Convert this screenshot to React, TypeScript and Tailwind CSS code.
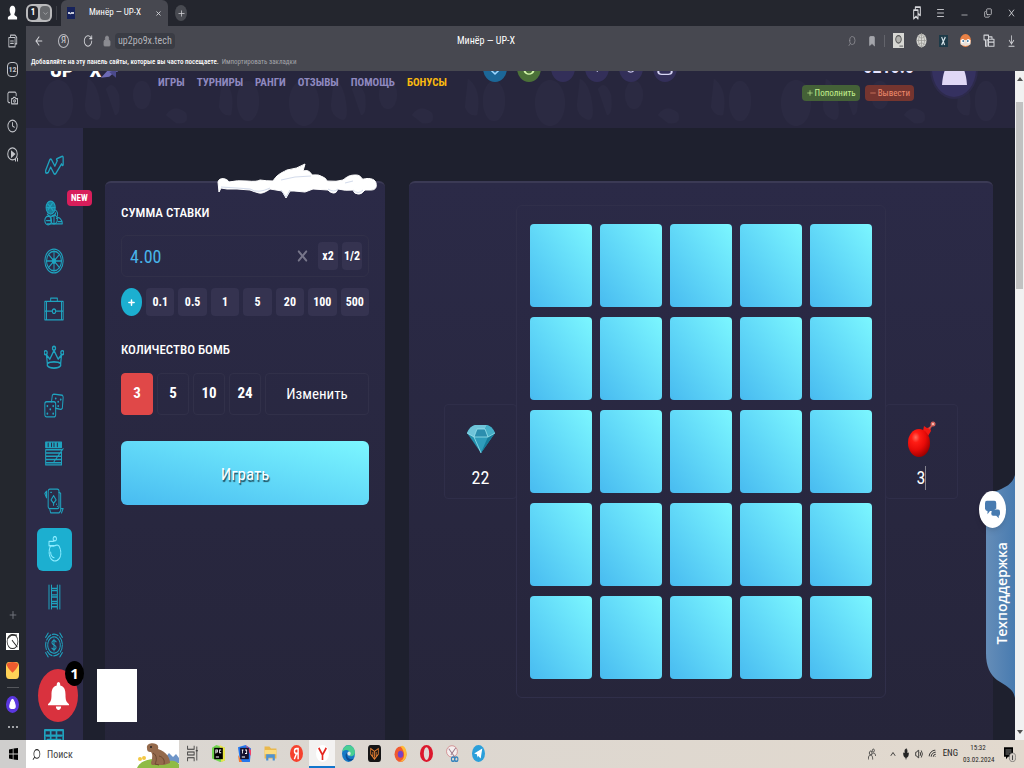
import React, { useState } from 'react';
import {
  ArrowLeft, RotateCw, Lock, Plus, X, Menu, Minus, Copy, Bookmark, Search,
  Clock, Mic, Volume2, Wifi, ChevronUp, ChevronDown, ArrowDownToLine,
} from 'lucide-react';

const stroke = { fill: 'none', stroke: 'currentColor', strokeWidth: 1.2, strokeLinejoin: 'round', strokeLinecap: 'round' } as const;

type IconProps = { className?: string; children: React.ReactNode; box?: string };

const Icon: React.FC<IconProps> = ({ className = 'h-4 w-3', box = '0 0 24 24', children }) => (
  <svg className={className} viewBox={box} preserveAspectRatio="none" aria-hidden="true">{children}</svg>
);

const games = [
  {
    name: 'Crash',
    icon: <path {...stroke} strokeWidth={1.5} d="M2 17L7 7Q8 6 9 7L13 13 16 8 15 7Q15 6 16 6L22 4Q23 4 23 5V12Q22 13 21 11L14 20Q13 21 12 20L8 14 5 19Q3 20 2 19Z" />,
  },
  {
    name: 'Fruits',
    isNew: true,
    icon: (
      <g {...stroke}>
        <ellipse cx="8" cy="7" rx="5.500" ry="6" fill="#1b7f9b" />
        <path d="M5 4l6 6M10 3L5 9M3 7h10M4 13c2 3 9 3 10-1M13 9c3 1 4 4 3 6" />
        <circle cx="5" cy="19" r="4" /><circle cx="12" cy="18" r="4" />
        <path d="M15 17c3-2 7 1 7 5H4M3 19h5M12 15v6M17 20h4" />
      </g>
    ),
  },
  {
    name: 'Wheel',
    icon: (
      <g {...stroke}>
        <circle cx="12" cy="12" r="11" /><circle cx="12" cy="12" r="9" /><circle cx="12" cy="12" r="2" />
        <path d="M12 3v18M3 12h18M5.500 6l13 12M18.500 6l-13 12" />
      </g>
    ),
  },
  {
    name: 'Cases',
    icon: (
      <g {...stroke}>
        <path d="M1 5h22v17H1zM8 5V2h8v3M1 14h9M14 14h9M3 5v17M21 5v17" /><circle cx="12" cy="14" r="2" />
      </g>
    ),
  },
  {
    name: 'King',
    icon: (
      <g {...stroke} strokeWidth={1.5}>
        <path d="M4 18L3 10l4 4 5-8 5 8 4-4-1 8M4 18c3-2 13-2 16 0v2c-3 3-13 3-16 0z" />
        <circle cx="2" cy="8" r="1.800" /><circle cx="12" cy="4" r="1.800" /><circle cx="22" cy="8" r="1.800" />
      </g>
    ),
  },
  {
    name: 'Dice',
    icon: (
      <g {...stroke}>
        <rect x="1" y="9" width="13" height="14" rx="2" />
        <path d="M9 9l1-6q1-1 2-1l10 1q1 1 1 2l-1 10q-1 1-2 1l-6-1" />
        <path strokeWidth="2" d="M14 6h.1M20 7h.1M17 9h.1M17 13h.1M4 13h.1M11 13h.1M7.500 16h.1M4 20h.1M11 20h.1" />
      </g>
    ),
  },
  {
    name: 'Keno',
    icon: (
      <g {...stroke}>
        <path d="M2 2h19v5H2z" fill="#1fa3bf" /><path d="M5 3v3M9 3v3M12 3v3M16 3v3" stroke="#2c2b48" />
        <path d="M2 9h19M2 12h19M2 15h18M2 18h19M2 21h19M2 23h19M2 9v14M21 9v14M23 8L12 20" />
      </g>
    ),
  },
  {
    name: 'Cards',
    icon: (
      <g {...stroke}>
        <rect x="5" y="1" width="13" height="18" rx="2" /><path d="M18 4l2 1v16l-2 2H8l-1-3M1 5l2-2v6zM21 19h2l-2 4M8 4h1" />
        <path d="M11.500 7l3 4-3 3-3-3zM11.500 14v2M15 15h.1M16 17h.1" />
      </g>
    ),
  },
  {
    name: 'Mines',
    active: true,
    icon: (
      <g {...stroke}>
        <path d="M8 9c-4 6-1 14 5 14s9-6 6-12c-1-3-4-3-6-2z" strokeDasharray="2 1" />
        <path d="M6 9V5h5l1-1M6 9h6" /><circle cx="13" cy="2.500" r="2" /><path d="M8 15c0 3 2 5 4 5" />
      </g>
    ),
  },
  {
    name: 'Tower',
    icon: <path {...stroke} d="M6 1v22M9 1v22M16 1v22M19 1v22M9 4h7M9 6h7M9 10h7M9 12h7M9 16h7M9 18h7M9 21h7" />,
  },
  {
    name: 'Coin',
    icon: (
      <g {...stroke}>
        <circle cx="12" cy="12" r="10" strokeDasharray="7 2" /><circle cx="12" cy="12" r="7.500" strokeDasharray="2 1" />
        <path d="M14.500 9c-2-2-5-1-5 1s5 2 5 4-3 3-5 1M12 6.500v11M5 1L2 5M19 1l3 4M5 23l-3-4M19 23l3-4" />
      </g>
    ),
  },
  { name: 'Bells', icon: <circle {...stroke} cx="12" cy="12" r="8" /> },
  { name: 'Slots', icon: <path {...stroke} strokeWidth={2} d="M1 2h22v21H1zM3 7h18M8 2v21M15 2v21M4 11h16" /> },
];

const navLinks = ['ИГРЫ', 'ТУРНИРЫ', 'РАНГИ', 'ОТЗЫВЫ', 'ПОМОЩЬ', 'БОНУСЫ'];
const amounts = ['0.1', '0.5', '1', '5', '20', '100', '500'];
const bombCounts = [3, 5, 10, 24];

const BrowserSidebar = () => (
  <aside className="flex w-[26px] shrink-0 flex-col items-center bg-[#24272e] pt-[5px] pr-px pb-[11px] text-[#c3c5ca]">
    <div className="flex flex-col items-center gap-3.5">
      <Icon className="h-[15px] w-[11px]">
        <path fill="#fff" d="M12 1c5 0 7 4 6 9-1 3-2 4-2 6l6 3v4H2v-4l6-3c0-2-1-3-2-6-1-5 1-9 6-9z" />
      </Icon>
      <Icon className="h-3.5 w-2.5"><path {...stroke} strokeWidth={2} d="M2 6h15v16H2zM6 6V2h11l4 4v11h-4M6 12h7M6 16h7" /></Icon>
      <span className="flex h-[15px] w-[11px] items-center justify-center rounded-sm border border-[#c3c5ca] text-[8px] font-bold">12</span>
      <Icon className="h-3.5 w-[11px]"><path {...stroke} strokeWidth={2} d="M20 8V4l-2-2H4L2 4v14l2 2h2M10 13h3l1-2h4l1 2h4v9H10z" /><circle {...stroke} strokeWidth={2} cx="16.500" cy="17" r="2" /></Icon>
      <Clock className="h-3.5 w-[11px]" preserveAspectRatio="none" />
      <Icon className="h-[15px] w-3"><circle {...stroke} strokeWidth={2} cx="11" cy="11" r="9.500" /><path fill="currentColor" d="M8 5l9 6-9 7zM16 23v-4h2v4zM20 23v-6h2v6z" /></Icon>
    </div>
    <div className="mt-auto flex flex-col items-center gap-3">
      <Plus className="h-3 w-2.5 text-[#777a82]" preserveAspectRatio="none" />
      <Icon className="h-[17px] w-[13px]"><path fill="#fff" d="M0 0h24v24H0z" /><circle cx="12" cy="12" r="10" fill="none" stroke="#333" strokeWidth="1.500" /><path d="M11 10l10 10M3 8L10 3h10" stroke="#222" strokeWidth="1.500" fill="none" /></Icon>
      <Icon className="h-[17px] w-[13px]"><rect width="24" height="24" rx="6" fill="#ffd257" /><path d="M1 3Q4 0 12 0T23 3Q22 8 12 15 2 8 1 3z" fill="#ee5b2f" /></Icon>
      <hr className="-my-1 w-3 border-[#55575c]" />
      <Icon className="h-[17px] w-[13px]"><circle cx="12" cy="12" r="12" fill="#5b37e0" /><path d="M12 5c2 0 5 7 5 10s-10 3-10 0 3-10 5-10z" fill="#fff" stroke="#fff" strokeWidth="2" /></Icon>
      <Icon className="h-1 w-2.5" box="0 0 10 4"><path d="M0 1h2v2H0zM4 1h2v2H4zM8 1h2v2H8z" fill="#a2a4a8" /></Icon>
    </div>
  </aside>
);

const TabStrip = () => (
  <div className="flex h-[26px] shrink-0 items-center bg-[#24262e] pr-2 text-[#d5d6da]">
    <div className="flex h-[18px] w-[26px] items-center justify-center gap-0.5 rounded-md bg-[#b9b9bb] text-[9px] font-bold">
      <span className="flex h-3.5 w-2.5 items-center justify-center rounded bg-[#24262e] text-white">1</span>
      <span className="flex h-3.5 w-2.5 items-center justify-center rounded bg-[#66686c] text-[#c0c1c4]"><ChevronDown size={7} /></span>
    </div>
    <span className="ml-1 h-3.5 w-px bg-[#3b3d44]" />
    <div className="ml-1 flex h-full w-[107px] items-center justify-between rounded-t-md bg-[#474850] px-1.5">
      <Icon className="h-3 w-2"><path fill="#17235c" d="M0 0h24v24H0z" /><path d="M3 12h5l3 2M12 12h9" stroke="#fff" strokeWidth="3" fill="none" /></Icon>
      <span className="text-[9px] text-white">Минёр — UP-X</span>
      <button aria-label="Закрыть вкладку"><X size={7} strokeWidth={3} /></button>
    </div>
    <button aria-label="Новая вкладка" className="ml-[7px] flex h-4 w-3 items-center justify-center rounded-[50%] bg-[#484a51]"><Plus size={9} /></button>
    <div className="ml-auto flex items-center gap-[15px]">
      <Icon className="h-3.5 w-2"><path {...stroke} strokeWidth={3} d="M2 7h13v15l-6-4-7 4zM7 7V2h15v14l-5-2" /></Icon>
      <Menu className="h-3 w-[9px]" preserveAspectRatio="none" />
      <Minus className="h-3 w-[9px] pt-1" preserveAspectRatio="none" />
      <Copy className="h-2.5 w-2 -scale-y-100" preserveAspectRatio="none" />
      <X className="h-3 w-[9px]" preserveAspectRatio="none" />
    </div>
  </div>
);

const Toolbar = () => (
  <div className="flex h-[45px] shrink-0 flex-col bg-[#474850] text-[#d5d6da]">
    <div className="flex h-[29px] items-center pr-2 pl-2">
      <div className="flex flex-1 items-center">
        <div className="flex w-[69px] items-center gap-3.5">
          <ArrowLeft className="h-3.5 w-2.5" preserveAspectRatio="none" />
          <span className="flex h-3.5 w-[11px] items-center justify-center rounded-[50%] border border-[#b9bac0] text-[9px]">Я</span>
          <RotateCw className="h-3.5 w-2.5" preserveAspectRatio="none" />
        </div>
        <Lock className="h-3 w-2 text-[#8b8c92]" preserveAspectRatio="none" fill="currentColor" />
        <span className="ml-1 rounded bg-[#3a3c44] px-[3px] text-[10px] leading-4 text-[#b3b4ba]">up2po9x.tech</span>
      </div>
      <span className="pr-[78px] text-[10px] text-white">Минёр — UP-X</span>
      <div className="flex flex-1 items-center justify-end gap-3">
        <Search className="h-3 w-2 -scale-x-100 text-[#8b8c92]" preserveAspectRatio="none" />
        <Bookmark className="h-3 w-2 text-[#a5a6ac]" preserveAspectRatio="none" fill="currentColor" />
        <span className="-mx-1 h-3 w-px bg-[#63646b]" />
        <Icon className="h-[15px] w-[11px]"><path d="M0 0h24v24H0z" fill="#d8d8d4" /><circle cx="12" cy="10" r="6" fill="#b2b2ae" stroke="#555" strokeWidth="2" /><path d="M14 21h8" stroke="#777" strokeWidth="2" /></Icon>
        <Icon className="h-[15px] w-[11px]"><circle cx="12" cy="12" r="11" fill="#d8d8d4" /><path {...stroke} stroke="#95958f" d="M12 1v22M1 12h22M4 5c6 4 10 4 16 0M4 19c6-4 10-4 16 0M12 1c-9 7-9 15 0 22 9-7 9-15 0-22" /></Icon>
        <Icon className="h-3 w-[9px]"><path d="M0 0h24v24H0z" fill="#1d3a48" /><path d="M7 4l8 16M17 4L7 20" stroke="#d8e4ea" strokeWidth="3" /></Icon>
        <Icon className="h-[13px] w-[11px]"><circle cx="12" cy="12" r="12" fill="#e98145" /><path d="M1 11h22v8c-6 4-16 4-22 0z" fill="#eadfd5" /><circle cx="6" cy="13" r="4" fill="#fff" /><circle cx="18" cy="13" r="4" fill="#fff" /><circle cx="7" cy="13" r="2" fill="#3c79a4" /><circle cx="17" cy="13" r="2" fill="#3c79a4" /></Icon>
        <Icon className="h-3.5 w-3"><path {...stroke} strokeWidth={2} d="M2 2h9v8H8v11H5V10H2zM11 5h7v4M11 9h11v12H11zM11 14h11" /></Icon>
        <ArrowDownToLine className="h-3.5 w-[9px]" preserveAspectRatio="none" />
      </div>
    </div>
    <p className="flex gap-[3px] pl-[5px] text-[7px] leading-[14px] font-medium text-white">
      Добавляйте на эту панель сайты, которые вы часто посещаете.
      <a href="#import" className="font-normal text-[#a3a4aa]">Импортировать закладки</a>
    </p>
  </div>
);

const HeaderPattern = () => (
  <svg className="absolute inset-0 h-full w-full" aria-hidden="true">
    <defs>
      <pattern id="food" width="246" height="57" patternUnits="userSpaceOnUse">
        <g fill="#2b2a42">
          <ellipse cx="32" cy="32" rx="15" ry="23" /><ellipse cx="116" cy="24" rx="9" ry="14" />
          <path d="M62 8q9 4 12 24t-6 16-9-14zM140 44q8-12 20-2 4 12-10 10zM196 8q14 10 9 36-8 2-12-8zM80 18q7-10 13 6 2 20-4 20z" />
          <ellipse cx="222" cy="30" rx="11" ry="20" />
        </g>
      </pattern>
    </defs>
    <rect width="100%" height="100%" fill="url(#food)" />
  </svg>
);

const badge = 'flex h-7 w-6 items-end justify-center rounded-[50%] pb-1.5';

const SiteHeader = () => (
  <header className="relative h-[57px] shrink-0 overflow-hidden bg-[#27263d]">
    <HeaderPattern />
    <div className="relative flex items-start">
      <div className="-mt-2 flex w-[132px] items-end pl-6 font-['Roboto',sans-serif] text-[18px] leading-4 font-black text-white">
        <span>UP</span>
        <span className="ml-4">X</span>
        <Icon className="h-3.5 w-[18px]"><path fill="#6c69b4" d="M0 22L14 2l10-2-2 12-3-1-8 9z" /><path fill="#4b4a8c" d="M11 12l9 10V8z" /></Icon>
      </div>
      <nav className="mt-1 flex gap-3 text-[11px] leading-4 font-bold">
        {navLinks.map((link) => (
          <a key={link} href="#nav" className={link === 'БОНУСЫ' ? 'text-[#f9b90f]' : 'text-[#8f89c0]'}>{link}</a>
        ))}
      </nav>
      <div className="-mt-[17px] ml-9 flex gap-[10px] text-white">
        <span className={`${badge} bg-[#1c6798]`}><Icon className="h-2 w-2.5"><path d="M2 6l10 12L22 6" fill="none" stroke="#9ed7ff" strokeWidth="4" /></Icon></span>
        <span className={`${badge} bg-[#4b7138]`}><Icon className="h-2 w-3"><path d="M2 2c2 22 18 22 20 0" fill="none" stroke="#d4f7a9" strokeWidth="4" /></Icon></span>
        <span className={`${badge} bg-[#332f59]`} />
        <span className={`${badge} bg-[#332f59]`}><Icon className="mb-1 h-1.5 w-1"><path d="M10 0h8v24h-8z" fill="#aaa7cc" /></Icon></span>
        <span className={`${badge} bg-[#332f59]`}><Icon className="mb-0.5 h-2 w-2.5"><path d="M2 2c2 22 16 22 20 0" fill="none" stroke="#c7c4e8" strokeWidth="4" /></Icon></span>
        <span className={`${badge} bg-[#332f59]`}><Icon className="h-2.5 w-4"><rect x="2" y="-6" width="20" height="26" rx="5" fill="none" stroke="#d7d5f4" strokeWidth="3" /></Icon></span>
      </div>
      <div className="mr-[18px] ml-auto flex flex-col items-end">
        <span className="-mt-3 text-[18px] leading-4 font-bold text-[#e6e4ff]">0210.0</span>
        <div className="mt-2.5 flex gap-[5px] text-[9px] leading-4">
          <button className="flex items-center gap-px rounded-sm bg-[#446137] px-1 text-[#c4f28e]"><Plus size={8} />Пополнить</button>
          <button className="flex items-center gap-px rounded-sm bg-[#75352f] px-1 text-[#ef8b6d]"><Minus size={8} />Вывести</button>
        </div>
      </div>
      <div className="-mt-[30px] mr-[39px] flex h-14 w-[44px] items-end justify-center rounded-[50%] bg-[#353160] pb-3 ring-2 ring-[#2d2a4b]">
        <Icon className="h-6 w-[25px]"><path d="M0 24C1 8 6 0 12 0s11 8 12 24z" fill="#e0d8f6" /></Icon>
      </div>
    </div>
  </header>
);

const GameMenu = () => (
  <nav aria-label="Игры" className="flex w-[57px] shrink-0 flex-col items-center overflow-hidden bg-[#2c2b48] pt-[13px] pr-px">
    {games.map((game) => (
      <a key={game.name} href="#game" aria-label={game.name} className="relative flex h-12 w-full shrink-0 items-center justify-center">
        <span className={game.active ? 'flex h-[43px] w-[35px] items-center justify-center rounded-md bg-[#1cafd0] text-[#8cecff]' : 'text-[#1fa3bf]'}>
          <Icon className="h-[26px] w-5">{game.icon}</Icon>
        </span>
      </a>
    ))}
  </nav>
);

const cardClass = 'relative rounded-t-md border-t-2 border-[#3b3a55] bg-linear-to-b from-[#2b2a47] to-[#26253a]';
const chipClass = 'h-7 rounded-[4px] bg-[#353350] text-[12px] font-bold text-white';

const Snow = () => (
  <svg className="absolute -top-5 right-2 h-9 w-40" viewBox="0 0 160 36" aria-hidden="true">
    <path
      fill="#fff"
      stroke="#fff"
      strokeLinejoin="round"
      d="M1 19C2 14 10 15 12 19Q20 17 30 18T43 17Q50 18 56 18C60 12 62 11 70 7Q80 6 88 1L86 8Q92 6 95 12 102 11 106 14 109 15 110 18 120 19 126 17C131 13 133 12 139 12S144 17 147 16 158 15 159 20 158 27 154 27L148 27Q144 32 141 31 137 31 136 27 128 28 121 26 119 31 116 30 112 29 111 27L96 26 88 29 77 28 73 28 69 35 65 28 53 26Q46 31 42 30T33 27L20 26 10 26 4 25 2 29Z"
    />
    <path d="M4 24l16 1 13 1q8 5 20-1M64 27l5 7 4-7M111 26q6 4 10 0M136 27q5 5 10 0M64 17l14-3 16-1M128 20l8-2" fill="none" stroke="#d3dbeb" />
  </svg>
);

const BetPanel = () => {
  const [bet, setBet] = useState('4.00');
  const [bombs, setBombs] = useState(3);

  return (
    <section className={`${cardClass} w-[280px] shrink-0 px-4 pt-5`}>
      <Snow />
      <label htmlFor="bet" className="block text-[13px] leading-5 font-medium text-white">СУММА СТАВКИ</label>
      <div className="mt-3 flex h-[42px] items-center gap-1 rounded-md border border-[#313049] px-1.5">
        <input
          id="bet"
          value={bet}
          onChange={(e) => setBet(e.target.value)}
          className="w-full min-w-0 flex-1 bg-transparent px-0.5 text-[18px] text-[#48b4ea] outline-none"
        />
        <button aria-label="Очистить" onClick={() => setBet('')} className="mr-1 text-[#77768a]">
          <X className="h-[18px] w-[15px]" strokeWidth={3} preserveAspectRatio="none" />
        </button>
        <button className={`${chipClass} w-5`}>x2</button>
        <button className={`${chipClass} w-5`}>1/2</button>
      </div>
      <div className="mt-[11px] flex gap-1">
        <button aria-label="Прибавить" className="flex h-7 w-[21px] items-center justify-center rounded-[50%] bg-[#1cafd0] text-white"><Plus size={9} strokeWidth={4} /></button>
        {amounts.map((amount) => (
          <button key={amount} onClick={() => setBet(amount)} className={`${chipClass} flex-1`}>{amount}</button>
        ))}
      </div>
      <h2 className="mt-6 text-[13px] leading-5 font-medium text-white">КОЛИЧЕСТВО БОМБ</h2>
      <div className="mt-[13px] flex h-[42px] gap-1 text-[15px] font-bold text-white">
        {bombCounts.map((count) => (
          <button
            key={count}
            onClick={() => setBombs(count)}
            className={`w-8 rounded-[4px] border pb-0.5 ${bombs === count ? 'border-[#e04848] bg-[#e04848]' : 'border-[#313049]'}`}
          >
            {count}
          </button>
        ))}
        <button className="flex-1 rounded-[4px] border border-[#313049] font-normal">Изменить</button>
      </div>
      <button className="mt-[26px] h-16 w-full rounded-md bg-linear-to-tr from-[#48bbf0] to-[#7cf7ff] pt-1 text-[17px] text-white [text-shadow:1px_2px_1px_#1f4f5f]">
        Играть
      </button>
    </section>
  );
};

const Gem = () => (
  <svg className="h-[30px] w-[30px]" viewBox="0 0 30 30" aria-hidden="true">
    <path d="M9 1h12q5 1 8 8L15 29 1 9Q4 2 9 1z" fill="#2591ae" />
    <path d="M9 1h12l-2 4h-8zM1 9q3-7 8-8l2 4-3 8z" fill="#6fc4d9" />
    <path d="M11 5h8l3 8H8z" fill="#2b8eae" />
    <path d="M29 9q-3-7-8-8l-2 4 3 8z" fill="#45aec7" />
    <path d="M8 13h14l-7 16z" fill="#2f9dbb" />
    <path d="M22 13l7-4-14 20z" fill="#167c9a" />
    <path d="M1 9l7 4h14l7-4M11 5L8 13l7 16M11 5h8l3 8" fill="none" stroke="#a8ecf5" strokeWidth=".7" />
  </svg>
);

const Bomb = () => (
  <svg className="h-[37px] w-[28px]" viewBox="0 0 28 37" aria-hidden="true">
    <defs>
      <radialGradient id="red" cx=".35" cy=".3" r=".75">
        <stop offset="0" stopColor="#ff6a5c" /><stop offset=".25" stopColor="#ff1c14" /><stop offset=".6" stopColor="#e80b08" /><stop offset="1" stopColor="#900" />
      </radialGradient>
    </defs>
    <path d="M15 10l1-5 3 2 3-1 1 4-3 5z" fill="#f01812" />
    <path d="M21 8l4-5" stroke="#c8524b" strokeWidth="2" />
    <circle cx="25" cy="3" r="2.500" fill="#d4625c" /><circle cx="25" cy="3" r="1" fill="#ffd8c8" />
    <ellipse cx="11" cy="22" rx="11" ry="14" fill="url(#red)" />
  </svg>
);

const sideClass = 'flex h-[95px] w-[73px] shrink-0 flex-col items-center justify-between rounded border border-[#2f2e49] pb-2 text-[18px] leading-6 text-white';

const Board = () => (
  <section className={`${cardClass} flex flex-1 items-start justify-center pt-[22px]`}>
    <div className="flex items-center">
      <div className={`${sideClass} -mr-px pt-[19px]`}>
        <Gem />
        <span>22</span>
      </div>
      <div className="grid grid-cols-[repeat(5,62px)] gap-x-2 gap-y-2.5 rounded-md border border-[#302f4a] px-[13px] py-[18px]">
        {Array.from({ length: 25 }, (_, i) => (
          <button key={i} aria-label={`Клетка ${i + 1}`} className="h-[83px] rounded-[4px] bg-linear-to-tr from-[#48bbf0] to-[#7cf7ff]" />
        ))}
      </div>
      <div className={`${sideClass} -ml-px pt-4`}>
        <Bomb />
        <span className="border-r border-[#85848f]">3</span>
      </div>
    </div>
  </section>
);

const Support = () => (
  <button className="absolute right-0 bottom-[42px] flex h-[223px] w-[30px] flex-col items-center">
    <svg className="absolute inset-0 h-full w-full" viewBox="0 0 30 223" preserveAspectRatio="none" aria-hidden="true">
      <defs>
        <linearGradient id="blue"><stop stopColor="#658db8" /><stop offset="1" stopColor="#487bb0" /></linearGradient>
      </defs>
      <path d="M30 0C27 10 20 12 14 15L1 20V178C1 192 5 199 12 205L20 210C26 214 29 217 30 223Z" fill="url(#blue)" />
    </svg>
    <span className="relative mt-4 -ml-4 flex h-[37px] w-[27px] items-center justify-center rounded-[50%] bg-white text-[#487bb0] shadow-md">
      <Icon className="h-[19px] w-[15px]">
        <path fill="currentColor" d="M3 1h12q3 0 3 3v7q-3 0-4 3h-6l-4 4v-4Q1 14 0 11V4q0-3 3-3zM13 12h8q3 0 3 3v2q0 3-2 3v3l-4-3h-5q-3 0-3-3 0-4 3-5z" />
      </Icon>
    </span>
    <span className="relative mt-3.5 ml-1 rotate-180 font-['Open_Sans','Noto_Sans',sans-serif] text-[14px] leading-5 font-semibold text-white [writing-mode:vertical-rl]">
      Техподдержка
    </span>
  </button>
);

const Page = () => (
  <div className="flex min-h-0 flex-1">
    <div className="relative flex min-w-0 flex-1 flex-col overflow-hidden bg-[#1e202e]">
      <SiteHeader />
      <div className="flex min-h-0 flex-1">
        <GameMenu />
        <main className="flex min-w-0 flex-1 gap-6 overflow-hidden px-[22px] pt-[53px]">
          <BetPanel />
          <Board />
        </main>
      </div>
      <span className="absolute top-[119px] left-[41px] rounded-sm bg-[#d81e5b] px-1 text-[9px] leading-4 font-bold text-white">NEW</span>
      <button aria-label="Уведомления" className="absolute bottom-[18px] left-3 flex h-[53px] w-10 items-center justify-center rounded-[50%] bg-[#d9323e]">
        <Icon className="h-7 w-[21px]"><path fill="#fff" d="M12 0c2 0 2 2 2 3 5 1 6 4 6 8 0 5 1 6 4 8v1H0v-1c3-2 4-3 4-8 0-4 1-7 6-8 0-1 0-3 2-3zM9 21h6c0 4-6 4-6 0z" /></Icon>
        <span className="absolute -top-2 -right-1.5 flex h-[25px] w-[19px] items-center justify-center rounded-[50%] bg-black font-['Noto_Sans',sans-serif] text-[15px] font-bold text-white">1</span>
      </button>
      <div className="absolute bottom-[18px] left-[71px] h-[53px] w-10 bg-white" />
      <Support />
    </div>
    <div className="flex w-[9px] shrink-0 flex-col items-center bg-[#f1f1f1]">
      <Icon className="mt-1.5 h-1 w-1.5"><path d="M12 0l12 24H0z" fill="#505050" /></Icon>
      <span className="mt-[21px] h-[187px] w-[7px] bg-[#c1c1c1]" />
      <Icon className="mt-auto mb-1.5 h-1 w-1.5"><path d="M0 0h24L12 24z" fill="#505050" /></Icon>
    </div>
  </div>
);

const apps = [
  { name: 'Представление задач', icon: <path d="M3 1v5h12V1M3 23v-5h12v5M3 10h12v4H3zM20 2v20M18 8h4" fill="none" stroke="#333" strokeWidth="1.500" /> },
  { name: 'PyCharm', icon: <><path d="M0 4L8 0l16 4v18l-9 2L0 19z" fill="#72d64f" /><path d="M14 0l10 4v18l-7 2z" fill="#e9e64b" /><path d="M4 4h16v16H4z" /><path d="M7 12V7h3v3H7M17 7h-3v4h3M7 17h6" fill="none" stroke="#fff" strokeWidth="1.500" /></> },
  { name: 'IntelliJ IDEA', icon: <><path d="M0 3l14-3 10 5-2 19H4z" fill="#2476ec" /><path d="M14 0l10 7v9z" fill="#f0416a" /><path d="M0 14l8 10H2z" fill="#f37a32" /><path d="M4 4h16v16H4z" fill="#15102e" /><path d="M7 7h3M8.500 7v5M13 7h3v5h-3M7 17h6" fill="none" stroke="#fff" strokeWidth="1.500" /></> },
  { name: 'Проводник', icon: <><path d="M1 2h9l3 3h10v14H1z" fill="#e9b84d" /><path d="M1 7h22v6H1z" fill="#fbdc80" /><path d="M4 22v-9h16v9h-4v-4H8v4z" fill="#4f93d2" /></> },
  { name: 'Яндекс', icon: <><circle cx="12" cy="12" r="12" fill="#f6412d" /><path d="M15 20V5h-3c-5 0-5 7 0 7h3M12 12l-4 8" fill="none" stroke="#fff" strokeWidth="2.500" /></> },
  { name: 'Яндекс Браузер', active: true, icon: <><circle cx="12" cy="12" r="12" fill="#fff" /><path d="M5 4l7 10 7-10M12 13v8" fill="none" stroke="#e52620" strokeWidth="3" /></> },
  { name: 'Edge', icon: <><circle cx="12" cy="12" r="12" fill="#1679c5" /><path d="M1 9C4-3 22-2 24 10c0 5-5 7-10 5 3-7-5-10-13-6z" fill="#49cf92" /><path d="M10 11c-3 6 4 11 12 8-4 5-13 5-15-2-1-3 0-5 3-6z" fill="#0d4b94" /><ellipse cx="13" cy="12" rx="3" ry="3" fill="#dfe6e8" /></> },
  { name: 'Лис', icon: <><rect width="24" height="24" rx="5" fill="#151515" /><path d="M5 5l7 4 7-4v8l-7 7-7-7zM9 10v6M15 10v6M12 9v9" fill="none" stroke="#ee8334" strokeWidth="1.500" /></> },
  { name: 'Firefox', icon: <><circle cx="12" cy="13" r="11" fill="#f05a31" /><path d="M12 2c6-4 13 5 11 13-2 7-8 9-13 8 9-1 13-12 2-21z" fill="#ffba37" /><circle cx="12" cy="13" r="5" fill="#7742c5" /></> },
  { name: 'Opera', icon: <><ellipse cx="12" cy="12" rx="12" ry="12" fill="#dc182d" /><ellipse cx="12" cy="12" rx="5" ry="9" fill="#dedad6" /></> },
  { name: 'Ножницы', icon: <><ellipse cx="11" cy="9" rx="10" ry="8" fill="#f4eeee" stroke="#c9686d" /><path d="M5 5l13 14M18 4L9 14" stroke="#9b7787" strokeWidth="1.500" /><circle cx="19" cy="20" r="3" fill="none" stroke="#3684bd" strokeWidth="2" /><circle cx="13" cy="20" r="3" fill="none" stroke="#3684bd" strokeWidth="2" /></> },
  { name: 'Telegram', icon: <><circle cx="12" cy="12" r="12" fill="#2b9fda" /><path d="M4 12l15-7-3 14-5-4-1 3-1-5z" fill="#fff" /></> },
];

const Taskbar = () => (
  <footer className="flex h-7 shrink-0 items-stretch bg-linear-to-r from-[#d9d6d2] to-[#e2d9ce] text-[#252525]">
    <button aria-label="Пуск" className="flex w-[26px] items-center justify-center bg-[#cfcecd]">
      <Icon className="h-3 w-[9px]"><path d="M0 3l10-1.500v9.500H0zM12 1l12-1v11H12zM0 13h10v9.500L0 21zM12 13h12v11l-12-1z" /></Icon>
    </button>
    <label className="flex w-[153px] items-center bg-white pl-1.5">
      <Search className="h-[13px] w-[9px] -scale-x-100" preserveAspectRatio="none" />
      <input placeholder="Поиск" className="ml-1.5 w-0 flex-1 text-[10px] outline-none placeholder:text-[#444]" />
      <svg className="h-7 w-[42px]" viewBox="0 0 42 28" aria-hidden="true">
        <path d="M28 18l4-5 4 4 3-3 3 4v5H28z" fill="#6f95c8" />
        <path d="M0 28C4 18 22 17 30 22c6-3 10 0 12 2v4z" fill="#8fbb45" />
        <path d="M10 8c-1-4 5-6 9-4q3 1 2 5c9 3 12 9 12 14l-6 2H15q-2-2 0-5c0-4 1-5-1-8-3 0-4-1-4-4z" fill="#946a4c" />
        <path d="M16 13c4 2 4 7 2 11l4 1M22 16c4 1 6 4 5 8" fill="none" stroke="#6b482f" />
        <circle cx="14" cy="7" r="1" fill="#222" />
        <circle cx="3" cy="19" r="2" fill="#f4c843" /><circle cx="7" cy="18" r="2" fill="#f4c843" />
      </svg>
    </label>
    {apps.map((app) => (
      <button
        key={app.name}
        aria-label={app.name}
        className={`flex w-[26px] items-center justify-center border-b-2 ${app.active ? 'border-[#1276cc] bg-[#f3f2f1]' : 'border-transparent'}`}
      >
        <Icon className="h-[17px] w-[13px]">{app.icon}</Icon>
      </button>
    ))}
    <div className="ml-auto flex items-center gap-[5px] pr-2 text-[9px]">
      <Icon className="mr-2 h-3 w-2"><path d="M1 23c0-8 4-9 7-9s6 2 6 9M8 14a4 4 0 1 1 .1 0M16 8a3 3 0 1 1 .1 0M13 12c5-4 9-1 10 4" fill="none" stroke="#333" strokeWidth="2" /></Icon>
      <ChevronUp className="h-3 w-2" preserveAspectRatio="none" />
      <Mic className="h-3 w-2" preserveAspectRatio="none" fill="currentColor" />
      <Volume2 className="h-3 w-2" preserveAspectRatio="none" />
      <Wifi className="h-2.5 w-2.5 -rotate-45" />
      <span>ENG</span>
      <time className="w-[30px] text-center text-[7px] leading-3 whitespace-nowrap">15:32<br />03.02.2024</time>
      <Icon className="ml-1.5 h-4 w-3"><path d="M0 2h18v14H8l-4 4v-4H0z" /><path d="M3 6h12M3 9h12M3 12h8" stroke="#ddd" /><circle cx="17" cy="17" r="6.500" fill="#d6cfc7" stroke="#555" /><path d="M17 14v7" stroke="#333" strokeWidth="1.500" /></Icon>
    </div>
  </footer>
);

const App: React.FC = () => (
  <div className="flex h-screen flex-col overflow-hidden bg-[#1e202e] font-['Roboto_Condensed','Liberation_Sans_Narrow',Roboto,sans-serif]">
    <div className="flex min-h-0 flex-1">
      <BrowserSidebar />
      <div className="flex min-w-0 flex-1 flex-col">
        <TabStrip />
        <Toolbar />
        <Page />
      </div>
    </div>
    <Taskbar />
  </div>
);

export default App;
